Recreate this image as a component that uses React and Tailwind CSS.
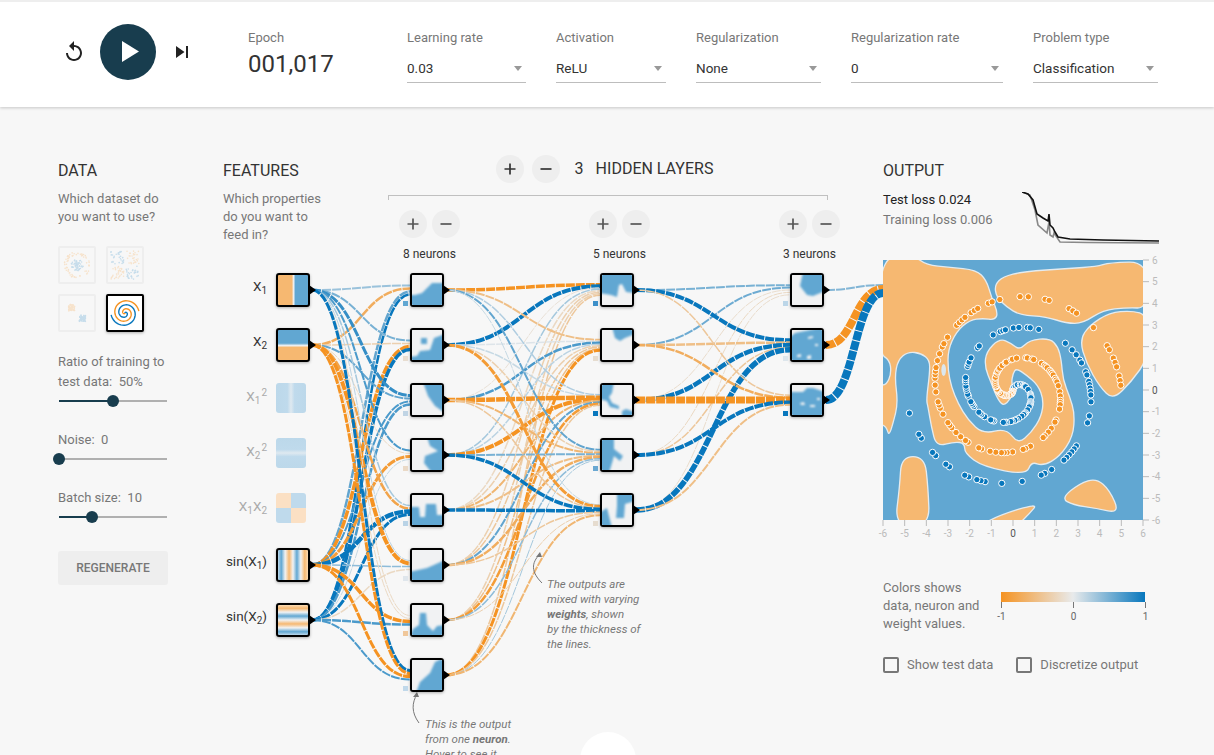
import React from 'react';

// heatmap colours as the page shows them
const ORANGE = '#f6b871';
const BLUE = '#61a7d2';
const PALE = '#f1f2f3';

const hexMix = (a, b, t) => {
  const out = [0, 1, 2].map((i) => {
    const pa = parseInt(a.slice(1 + i * 2, 3 + i * 2), 16);
    const pb = parseInt(b.slice(1 + i * 2, 3 + i * 2), 16);
    return Math.round(pa + (pb - pa) * t);
  });
  return `rgb(${out.join(',')})`;
};
const weightColor = (w) =>
  w < 0 ? hexMix('#e8eaeb', '#f59322', -w) : hexMix('#e8eaeb', '#0877bd', w);

// tiny seeded random so the dots stay the same on every load
const seeded = (seed) => {
  let s = seed;
  return () => {
    s = (s * 1664525 + 1013904223) % 4294967296;
    return s / 4294967296;
  };
};

// rounds a polygon off by running quadratic curves through the edge midpoints
const smoothPath = (points) => {
  const pts = points.split(' ').map((p) => p.split(',').map(Number));
  const mid = (a, b) => [(a[0] + b[0]) / 2, (a[1] + b[1]) / 2];
  let d = '';
  pts.forEach((p, i) => {
    const next = pts[(i + 1) % pts.length];
    const prev = pts[(i - 1 + pts.length) % pts.length];
    const m1 = mid(prev, p);
    const m2 = mid(p, next);
    if (i === 0) d += `M${m1[0]},${m1[1]} `;
    d += `Q${p[0]},${p[1]} ${m2[0]},${m2[1]} `;
  });
  return `${d}Z`;
};

// pushes thumbnail points on the box edge outward, so the blur doesn't fade at the border
const bleed = (points) =>
  points
    .split(' ')
    .map((p) =>
      p
        .split(',')
        .map((n) => (n === '0' ? -3 : n === '30' ? 33 : n))
        .join(',')
    )
    .join(' ');

/* ---------- network data (coordinates are relative to the network column) ---------- */
const ORIGIN_X = 223;
const ORIGIN_Y = 108;
const colY = (i) => 273 + i * 55 - ORIGIN_Y;

const features = [
  { row: 0, active: true, label: <>X<sub className="text-[10px]">1</sub></>, bg: 'bg-[linear-gradient(90deg,#f6b871_0%,#f6b871_46%,#f1f2f3_52%,#61a7d2_58%,#61a7d2_100%)]' },
  { row: 1, active: true, label: <>X<sub className="text-[10px]">2</sub></>, bg: 'bg-[linear-gradient(180deg,#61a7d2_0%,#61a7d2_44%,#f1f2f3_52%,#f6b871_58%,#f6b871_100%)]' },
  { row: 2, label: <>X<sub className="text-[10px]">1</sub><sup className="text-[10px] ml-[1px]">2</sup></>, bg: 'bg-[linear-gradient(90deg,#bcd8ea_0%,#bfdaec_38%,#dfe9f0_50%,#bfdaec_62%,#bcd8ea_100%)]' },
  { row: 3, label: <>X<sub className="text-[10px]">2</sub><sup className="text-[10px] ml-[1px]">2</sup></>, bg: 'bg-[linear-gradient(180deg,#bcd8ea_0%,#bfdaec_38%,#dfe9f0_50%,#bfdaec_62%,#bcd8ea_100%)]' },
  { row: 4, label: <>X<sub className="text-[10px]">1</sub>X<sub className="text-[10px]">2</sub></>, bg: 'bg-[conic-gradient(#bfdaec_0_25%,#fbe0c4_25%_50%,#bfdaec_50%_75%,#fbe0c4_75%_100%)]' },
  { row: 5, active: true, label: <>sin(X<sub className="text-[10px]">1</sub>)</>, bg: 'bg-[linear-gradient(90deg,#bcd8ea_0%,#61a7d2_11%,#f1f2f3_24%,#f6b871_37%,#f1f2f3_50%,#61a7d2_63%,#f1f2f3_76%,#f6b871_89%,#fbdcb5_100%)]' },
  { row: 6, active: true, label: <>sin(X<sub className="text-[10px]">2</sub>)</>, bg: 'bg-[linear-gradient(180deg,#fbdcb5_0%,#f6b871_11%,#f1f2f3_24%,#61a7d2_37%,#f1f2f3_50%,#f6b871_63%,#f1f2f3_76%,#61a7d2_89%,#bcd8ea_100%)]' },
];

// blue patches of each neuron thumbnail, in a 30x30 box
const layers = [
  {
    x: 410 - ORIGIN_X,
    nodes: [
      { shapes: ['0,20 3,20 10,18 15,13 20,8 30,8 30,30 0,30'], bias: '#61a7d2' },
      { shapes: ['0,27 5,26 8,21 18,20 22,8 30,4 30,30 0,30', '9,8 15,8 15,14 9,14'], bias: '#e8ddd0' },
      { shapes: ['11,0 16,11 23,21 30,28 30,0'], bias: '#c0d4e4' },
      { shapes: ['15,0 18,6 26,11 13,16 12,23 20,30 30,30 30,0'], bias: '#ead9c6' },
      { shapes: ['0,12 7,12 8,22 13,22 14,9 24,9 25,20 30,20 30,30 0,30'], bias: '#b9d3e6' },
      { shapes: ['0,22 15,18 30,10 30,30 0,30'], bias: '#dfe6ec' },
      { shapes: ['0,30 1,24 7,20 8,8 14,8 15,20 21,26 25,21 30,20 30,30'], bias: '#f0c79a' },
      { shapes: ['4,30 8,22 18,13 23,2 30,0 30,30'], bias: '#c0d8ea' },
    ],
  },
  {
    x: 600 - ORIGIN_X,
    nodes: [
      { shapes: ['0,0 30,0 30,18 24,17 20,9 17,10 15,22 9,20 0,18'], bias: '#3e90c9' },
      { shapes: ['10,0 13,8 18,11 23,8 30,4 30,0'], bias: '#e6dccf' },
      { shapes: ['0,0 12,0 10,8 7,12 10,18 17,21 17,24 8,22 5,16 0,14', '20,26 24,24 30,27 30,30 20,30'], bias: '#0877bd' },
      { shapes: ['0,0 12,0 12,9 21,16 18,21 12,16 10,23 7,30 0,30'], bias: '#6aa8d2' },
      { shapes: ['15,0 15,11 14,23 22,23 23,9 30,6 30,0', '0,18 5,13 10,30 0,30'], bias: '#e6dccf' },
    ],
  },
  {
    x: 790 - ORIGIN_X,
    nodes: [
      { shapes: ['11,0 8,11 15,20 21,21 30,16 30,0'], bias: '#bcd6e8' },
      { shapes: ['3,3 30,0 30,30 0,30 0,8'], specks: ['16,7 21,6 21,8 16,9', '5,25 9,24 9,27 5,27', '15,26 19,25 19,29 15,29', '23,14 26,14 26,16 23,16'], bias: '#dde6ec' },
      { shapes: ['0,7 11,7 15,3 21,3 30,7 30,30 0,30'], specks: ['8,18 12,17 13,20 9,20', '18,20 23,20 23,22 18,22', '25,13 28,13 28,15 25,15'], bias: '#0877bd' },
    ],
  },
];

// [weight, stroke width] : negative is orange, positive is blue
// inputs into each neuron of layer 1, order X1, X2, sin(X1), sin(X2)
const inputLinks = [
  [[0.35, 2], [-0.7, 2.5], [0.6, 2.5], [1, 2.5]],
  [[0.5, 2], [-0.3, 1.5], [-1, 3.5], [1, 3.5]],
  [[0.8, 3], [0.6, 2], [0.7, 2], [0.7, 2.5]],
  [[0.7, 2], [-0.2, 1], [-0.9, 3], [0.15, 1]],
  [[0.3, 1.5], [-0.8, 2.5], [1, 4.5], [1, 3]],
  [[0.2, 1], [-1, 4], [0.4, 1.5], [-0.2, 1.5]],
  [[-0.2, 1], [-0.2, 1], [-1, 3.5], [0.7, 2.5]],
  [[1, 3], [-1, 3], [-1, 3], [0.7, 2]],
];
// h1 -> h2, one row per target neuron
const midLinks = [
  [[-1, 3.5], [1, 4], [-0.1, 1], [0.3, 1.5], [-0.2, 1.5], [-0.3, 1.5], [-0.3, 1.5], [-0.4, 1.5]],
  [[-0.5, 2], [0.05, 1.5], [0.7, 2.5], [0.2, 1.5], [-0.3, 1.5], [-0.4, 1.5], [-0.5, 1.5], [-1, 3]],
  [[0.25, 1.5], [0.15, 1.5], [-1, 4.5], [-1, 4], [-0.6, 2], [0.6, 2], [-0.9, 2.5], [-0.4, 1.5]],
  [[0.6, 2], [-0.3, 1.5], [-0.6, 2], [0.5, 2], [-0.5, 2], [-0.7, 2.5], [0.4, 1.5], [0.3, 1]],
  [[0.15, 1], [-0.9, 3], [-0.4, 1.5], [1, 3.5], [1, 3.5], [-0.4, 1.5], [-0.3, 1], [-0.6, 2]],
];
// h2 -> h3
const lastLinks = [
  [[0.5, 2], [0.55, 2], [-0.15, 1], [-0.2, 1], [-0.15, 1]],
  [[1, 4], [-0.5, 2.5], [1, 4.5], [-0.4, 1.5], [1, 5.5]],
  [[-0.4, 1.5], [-0.7, 2.5], [-1, 7], [1, 4], [-0.5, 2]],
];
const outLinks = [[0.45, 2], [-1, 8], [1, 8]];

const linkPath = (x1, y1, x2, y2) => {
  const mx = (x1 + x2) / 2;
  return `M${x1},${y1} C${mx},${y1} ${mx},${y2} ${x2},${y2}`;
};
const targetOffset = (i, len) => ((i - (len - 1) / 2) / len) * 12;

const buildLinks = () => {
  const links = [];
  const activeRows = features.filter((f) => f.active).map((f) => f.row);
  const featX = 276 - ORIGIN_X + 36;
  inputLinks.forEach((row, t) => {
    row.forEach(([w, sw], i) => {
      links.push({
        d: linkPath(featX, colY(activeRows[i]) + 17, layers[0].x, colY(t) + 17 + targetOffset(i, 4)),
        w,
        sw,
      });
    });
  });
  [midLinks, lastLinks].forEach((table, l) => {
    const from = layers[l].x + 36;
    const to = layers[l + 1].x;
    table.forEach((row, t) => {
      row.forEach(([w, sw], i) => {
        links.push({
          d: linkPath(from, colY(i) + 17, to, colY(t) + 17 + targetOffset(i, row.length)),
          w,
          sw,
        });
      });
    });
  });
  outLinks.forEach(([w, sw], i) => {
    links.push({
      d: linkPath(layers[2].x + 36, colY(i) + 17, 883 - ORIGIN_X, 289 - ORIGIN_Y + targetOffset(i, 3)),
      w,
      sw,
    });
  });
  return links;
};

/* ---------- spiral data ---------- */
const spiral = (delta, n = 250) =>
  Array.from({ length: n }, (_, i) => {
    const r = (i / n) * 5;
    const t = ((1.75 * i) / n) * 2 * Math.PI + delta;
    return [r * Math.sin(t), r * Math.cos(t)];
  });

const rand = seeded(42);
const trainPoints = [
  ...spiral(0).map((p) => ({ p, color: '#0877bd' })),
  ...spiral(Math.PI).map((p) => ({ p, color: '#f59322' })),
].filter(() => rand() < 0.5);

/* ---------- small pieces ---------- */
const IconBtn = ({ sign, big }) => (
  <button className={`size-7 rounded-full bg-[#eeeeee] flex items-center justify-center ${big ? 'text-[#333]' : 'text-[#555]'}`}>
    <svg width="16" height="16" viewBox="0 0 16 16">
      <path d={sign === '+' ? 'M2.5 8h11M8 2.5v11' : 'M2.5 8h11'} stroke="currentColor" strokeWidth="1.7" fill="none" />
    </svg>
  </button>
);

const Dropdown = ({ label, value, width }) => (
  <div className={width}>
    <div className="text-[13px] leading-[18px] text-[#777]">{label}</div>
    <div className="mt-[8px] h-[28px] pb-[1px] border-b border-[#bdbdbd] flex items-center justify-between pr-[4px]">
      <span className="text-[13.5px] text-[#333]">{value}</span>
      <span className="w-0 h-0 border-x-[4.5px] border-x-transparent border-t-[5px] border-t-[#999]" />
    </div>
  </div>
);

const Slider = ({ pct }) => (
  <div className="relative h-[18px] w-[108px] ml-[1px]">
    <div className="absolute top-[8px] inset-x-0 h-[2px] bg-[#b0b0b0]" />
    <div className="absolute top-[8px] left-0 h-[2px] bg-[#183d4e]" style={{ width: `${pct}%` }} />
    <div className="absolute top-[3px] size-3 -ml-[6px] rounded-full bg-[#183d4e]" style={{ left: `${pct}%` }} />
  </div>
);

const Dots = ({ seed, gen }) => {
  const r = seeded(seed);
  return (
    <svg viewBox="0 0 34 34" className="size-full opacity-20">
      {Array.from({ length: 130 }, (_, i) => {
        const [x, y, c] = gen(r, i);
        return <circle key={i} cx={17 + (x * 17) / 6} cy={17 - (y * 17) / 6} r="0.8" fill={c} />;
      })}
    </svg>
  );
};

const genCircle = (r, i) => {
  const a = r() * Math.PI * 2;
  if (i % 2) {
    const d = r() * 2.2;
    return [d * Math.cos(a), d * Math.sin(a), '#0877bd'];
  }
  const d = 3.4 + r() * 1.3;
  return [d * Math.cos(a), d * Math.sin(a), '#f59322'];
};
const genXor = (r) => {
  const pick = () => (r() * 4.6 + 0.4) * (r() < 0.5 ? -1 : 1);
  const x = pick();
  const y = pick();
  return [x, y, x * y > 0 ? '#f59322' : '#0877bd'];
};
const genGauss = (r, i) => {
  const s = i % 2 ? 1 : -1;
  const x = s * 1.9 + (r() - 0.5) * 2.2;
  const y = -s * 1.9 + (r() - 0.5) * 2.2;
  return [x, y, s > 0 ? '#0877bd' : '#f59322'];
};

const spiralLine = (delta) =>
  spiral(delta, 80)
    .map(([x, y]) => `${17 + (x * 17) / 6},${17 - (y * 17) / 6}`)
    .join(' ');

const DatasetThumb = ({ children, selected }) => (
  <div
    className={`size-[38px] rounded-[2px] border-2 overflow-hidden ${
      selected ? 'border-black bg-white shadow-[0_1px_3px_rgba(0,0,0,0.3)]' : 'border-[#eeeeee]'
    }`}
  >
    {children}
  </div>
);

const Thumb = ({ shapes, specks }) => (
  <svg viewBox="0 0 30 30" className="size-full block">
    <rect width="30" height="30" fill={PALE} />
    <g className="blur-[1px]">
      {shapes.map((s) => (
        <polygon key={s} points={bleed(s)} fill={BLUE} />
      ))}
      {(specks || []).map((s) => (
        <polygon key={s} points={s} fill={PALE} />
      ))}
    </g>
  </svg>
);

const NODE_BOX = 'absolute size-[34px] rounded-[3px] border-2 border-black overflow-hidden shadow-[0_1px_3px_rgba(0,0,0,0.3)]';

const Network = () => (
  <>
    <svg className="absolute left-0 top-0 overflow-visible" width="660" height="647">
      {buildLinks().map((l, i) => (
        <path
          key={i}
          d={l.d}
          fill="none"
          stroke={weightColor(l.w)}
          strokeWidth={l.sw}
          strokeDasharray="9 1"
        />
      ))}
      {[276 - ORIGIN_X, ...layers.map((l) => l.x)].map((x, c) =>
        (c === 0 ? features.filter((f) => f.active).map((f) => f.row) : layers[c - 1].nodes.map((_, i) => i)).map((row) => (
          <polygon
            key={`${c}-${row}`}
            points={`${x + 33},${colY(row) + 12} ${x + 40},${colY(row) + 17} ${x + 33},${colY(row) + 22}`}
            fill="#000"
          />
        ))
      )}
      <g fill="none" stroke="#777" strokeWidth="1">
        <path d="M196,615 C188,604 189,595 194,586" />
        <path d="M319,475 C308,464 308,455 317,446" />
      </g>
      <polygon points="194,584 190,589 196,589" fill="#777" />
      <polygon points="317,444 313,449 319,449" fill="#777" />
    </svg>

    {features.map((f) => (
      <div key={f.row}>
        <div
          className={`absolute right-[616px] text-[13.5px] leading-[20px] whitespace-nowrap ${f.active ? 'text-[#333]' : 'text-[#aaaaaa]'}`}
          style={{ top: colY(f.row) + 3 }}
        >
          {f.label}
        </div>
        {f.active ? (
          <div className={`${NODE_BOX} ${f.bg}`} style={{ left: 53, top: colY(f.row) }} />
        ) : (
          <div className={`absolute size-[30px] rounded-[3px] ${f.bg}`} style={{ left: 53, top: colY(f.row) }} />
        )}
      </div>
    ))}

    {layers.map((layer) =>
      layer.nodes.map((n, i) => (
        <div key={`${layer.x}-${i}`}>
          <div className={`${NODE_BOX}`} style={{ left: layer.x, top: colY(i) }}>
            <Thumb shapes={n.shapes} specks={n.specks} />
          </div>
          <div
            className="absolute size-[5px]"
            style={{ left: layer.x - 7, top: colY(i) + 28, backgroundColor: n.bias }}
          />
        </div>
      ))
    )}

    <div className="absolute left-[324px] top-[469px] whitespace-nowrap text-[11.5px] leading-[15px] italic text-[#777]">
      The outputs are<br />mixed with varying<br /><b>weights</b>, shown<br />by the thickness of<br />the lines.
    </div>
    <div className="absolute left-[202px] top-[609px] whitespace-nowrap text-[11.5px] leading-[15px] italic text-[#777]">
      This is the output<br />from one <b>neuron</b>.<br />Hover to see it<br />larger.
    </div>
  </>
);

const LossChart = () => (
  <svg viewBox="1022 192 137 53" className="w-[137px] h-[53px] mt-[2px] block">
    <polyline
      fill="none"
      stroke="#888"
      strokeWidth="1.6"
      points="1022,192 1030,195 1035,210 1038,225 1047,233 1049,222 1050,235 1053,237 1054,233 1060,242 1087,242.5 1159,243"
    />
    <polyline
      fill="none"
      stroke="#111"
      strokeWidth="1.6"
      points="1022,192 1028,194 1033,200 1037,214 1043,218 1048,221 1049,214 1050,225 1053,228 1055,232 1058,237 1070,239 1103,240 1159,241"
    />
  </svg>
);

const orangeRegions = [
  '-12,-12 95,-12 130,15 200,22 280,30 310,60 325,110 345,160 335,180 300,175 260,180 220,215 195,270 195,330 205,380 225,430 255,480 300,522 370,505 405,552 445,518 475,470 482,420 465,375 430,345 400,325 390,340 385,370 395,395 365,440 345,420 325,370 305,320 310,275 350,235 385,250 410,270 440,240 500,235 525,260 535,300 540,360 560,410 575,460 570,530 530,590 480,618 445,605 430,645 300,620 245,580 245,550 215,545 160,560 145,500 135,440 130,420 140,340 140,300 115,280 75,275 45,300 35,350 45,430 30,490 18,528 10,500 -12,490 -12,375 10,375 25,340 20,300 -12,280',
  '335,75 360,50 420,35 560,25 640,20 680,8 795,5 795,145 730,143 660,150 600,190 550,190 490,170 410,165 370,140 340,110',
  '590,240 620,195 680,158 745,152 795,165 795,295 745,365 690,420 650,380 610,310',
  '55,590 125,590 135,680 140,800 35,800 50,680',
  '285,800 350,765 465,730 440,760 400,800',
  '535,715 590,670 640,655 680,690 710,760 640,745 570,735',
];

const Heatmap = () => {
  const ticks = [6, 5, 4, 3, 2, 1, 0, -1, -2, -3, -4, -5, -6];
  return (
    <svg width="276" height="280" className="block overflow-visible">
      <svg x="0" y="0" width="260" height="260" viewBox="0 0 780 780">
        <rect width="780" height="780" fill={BLUE} />
        <g className="blur-[1.4px]" fill={ORANGE} stroke="#e4ebef" strokeWidth="4">
          {orangeRegions.map((r) => (
            <path key={r} d={smoothPath(r)} />
          ))}
        </g>
        <ellipse cx="182" cy="330" rx="7" ry="18" fill="#dbe7ee" className="blur-[1px]" />
        {trainPoints.map(({ p: [x, y], color }, i) => (
          <circle
            key={i}
            cx={(x + 6) * 65}
            cy={(6 - y) * 65}
            r="9.5"
            fill={color}
            stroke="#fff"
            strokeWidth="3"
          />
        ))}
      </svg>
      {ticks.map((t) => {
        const pos = ((6 - t) * 260) / 12;
        const color = t === 0 ? '#555' : '#bbbbbb';
        return (
          <g key={t} fontFamily="Roboto, sans-serif" fontSize="10" fill={color}>
            <line x1="260" x2="266" y1={pos} y2={pos} stroke="#bbb" />
            <text x="269" y={pos + 3.5}>{t}</text>
            <line x1={260 - pos} x2={260 - pos} y1="260" y2="266" stroke="#bbb" />
            <text x={260 - pos} y="277" textAnchor="middle">{t}</text>
          </g>
        );
      })}
    </svg>
  );
};

const Check = ({ label }) => (
  <label className="flex items-center gap-[8px] text-[13px] text-[#777]">
    <span className="size-[16px] rounded-[2px] border-2 border-[#777] block" />
    {label}
  </label>
);

const App = () => (
  <div className="relative h-[755px] overflow-hidden bg-[#f7f7f7] font-['Roboto',sans-serif]">
    {/* Top bar */}
    <header className="h-[107px] bg-white border-t-2 border-[#eeeeee] shadow-[0_1px_3px_rgba(0,0,0,0.2)] flex pl-[62px]">
      <div className="flex items-center gap-[14px] h-[100px]">
        <svg width="24" height="24" viewBox="0 0 24 24" fill="#222">
          <path d="M12 5V1L7 6l5 5V7c3.31 0 6 2.69 6 6s-2.69 6-6 6-6-2.69-6-6H4c0 4.42 3.58 8 8 8s8-3.58 8-8-3.58-8-8-8z" />
        </svg>
        <button className="size-14 rounded-full bg-[#183d4e] flex items-center justify-center">
          <svg width="17" height="22" viewBox="0 0 17 22" className="ml-[4px]">
            <polygon points="0,0 17,10.5 0,21" fill="#fff" />
          </svg>
        </button>
        <svg width="24" height="24" viewBox="0 0 24 24" fill="#222">
          <path d="M6 18l8.5-6L6 6v12zM16 6v12h2V6h-2z" />
        </svg>
      </div>
      <div className="ml-[54px] w-[159px] pt-[27px]">
        <div className="text-[13px] leading-[18px] text-[#777]">Epoch</div>
        <div className="mt-[3px] text-[24px] leading-[28px] text-[#333]">001,017</div>
      </div>
      <div className="flex gap-[30px] pt-[27px]">
        <Dropdown label="Learning rate" value="0.03" width="w-[119px]" />
        <Dropdown label="Activation" value="ReLU" width="w-[110px]" />
        <Dropdown label="Regularization" value="None" width="w-[125px]" />
        <Dropdown label="Regularization rate" value="0" width="w-[152px]" />
        <Dropdown label="Problem type" value="Classification" width="w-[125px]" />
      </div>
    </header>

    <main className="flex pl-[58px] pt-[1px]">
      {/* Data column */}
      <section className="w-[165px] pt-[53px]">
        <h4 className="text-[16px] leading-[20px] text-[#333]">DATA</h4>
        <p className="mt-[9px] w-[110px] text-[13px] leading-[18px] text-[#777]">Which dataset do you want to use?</p>
        <div className="mt-[20px] grid grid-cols-[38px_38px] gap-[10px]">
          <DatasetThumb><Dots seed={3} gen={genCircle} /></DatasetThumb>
          <DatasetThumb><Dots seed={7} gen={genXor} /></DatasetThumb>
          <DatasetThumb><Dots seed={11} gen={genGauss} /></DatasetThumb>
          <DatasetThumb selected>
            <svg viewBox="0 0 34 34" className="size-full">
              <polyline points={spiralLine(0)} fill="none" stroke="#0877bd" strokeWidth="1.4" />
              <polyline points={spiralLine(Math.PI)} fill="none" stroke="#f59322" strokeWidth="1.4" />
            </svg>
          </DatasetThumb>
        </div>
        <p className="mt-[20px] w-[110px] text-[13px] leading-[20px] text-[#777]">Ratio of training to test data:&nbsp; 50%</p>
        <Slider pct={50} />
        <p className="mt-[20px] text-[13px] leading-[20px] text-[#777]">Noise:&nbsp; 0</p>
        <Slider pct={0} />
        <p className="mt-[20px] text-[13px] leading-[20px] text-[#777]">Batch size:&nbsp; 10</p>
        <Slider pct={31} />
        <button className="mt-[25px] w-[110px] h-[34px] rounded-[3px] bg-[#eeeeee] text-[12px] font-medium text-[#777]">REGENERATE</button>
      </section>

      {/* Features and hidden layers */}
      <section className="relative w-[660px] h-[646px] flex">
        <Network />
        <div className="relative w-[165px] pt-[53px]">
          <h4 className="text-[16px] leading-[20px] text-[#333]">FEATURES</h4>
          <p className="mt-[9px] w-[110px] text-[13px] leading-[18px] text-[#777]">Which properties do you want to feed in?</p>
        </div>
        <div className="relative w-[440px] pt-[47px]">
          <div className="flex items-center justify-center gap-[8px] h-[28px] ml-[-7px]">
            <IconBtn sign="+" big />
            <IconBtn sign="-" big />
            <span className="ml-[7px] text-[16px] text-[#333]">3</span>
            <span className="ml-[4px] text-[16px] text-[#333]">HIDDEN LAYERS</span>
          </div>
          <div className="mt-[12px] h-[5px] w-[440px] border-x border-t border-[#c0c0c0]" />
          <div className="relative flex pl-[11px] gap-[129px] mt-[10px]">
            {['8 neurons', '5 neurons', '3 neurons'].map((t) => (
              <div key={t} className="w-[61px]">
                <div className="flex gap-[5px]">
                  <IconBtn sign="+" />
                  <IconBtn sign="-" />
                </div>
                <div className="mt-[8px] text-[12px] leading-[16px] text-[#333] whitespace-nowrap pl-[4px]">{t}</div>
              </div>
            ))}
          </div>
        </div>
      </section>

      {/* Output */}
      <section className="relative w-[276px] pt-[53px]">
        <h4 className="text-[16px] leading-[20px] text-[#333]">OUTPUT</h4>
        <div className="mt-[9px] h-[70px] flex">
          <div className="w-[139px] text-[13px] leading-[20px]">
            <div className="text-[#222]">Test loss 0.024</div>
            <div className="text-[#777]">Training loss 0.006</div>
          </div>
          <LossChart />
        </div>
        <Heatmap />
        <div className="mt-[39px] flex">
          <p className="w-[118px] pr-[15px] text-[13px] leading-[18px] text-[#777]">Colors shows data, neuron and weight values.</p>
          <div className="w-[146px] mt-[13px]">
            <div className="h-[10px] w-[144px] bg-[linear-gradient(90deg,#f59322,#e8eaeb_50%,#0877bd)]" />
            <div className="flex justify-between w-[145px] text-[10px] leading-[12px] text-[#666]">
              {['-1', '0', '1'].map((t) => (
                <div key={t} className="flex flex-col items-center w-px">
                  <div className="w-px h-[6px] bg-[#777]" />
                  <span className="mt-[3px]">{t}</span>
                </div>
              ))}
            </div>
          </div>
        </div>
        <div className="mt-[22px] flex gap-[23px]">
          <Check label="Show test data" />
          <Check label="Discretize output" />
        </div>
      </section>
    </main>

    {/* partially visible round button at the page fold */}
    <div className="absolute left-[580px] top-[732px] size-14 rounded-full bg-white" />
  </div>
);

export default App;
